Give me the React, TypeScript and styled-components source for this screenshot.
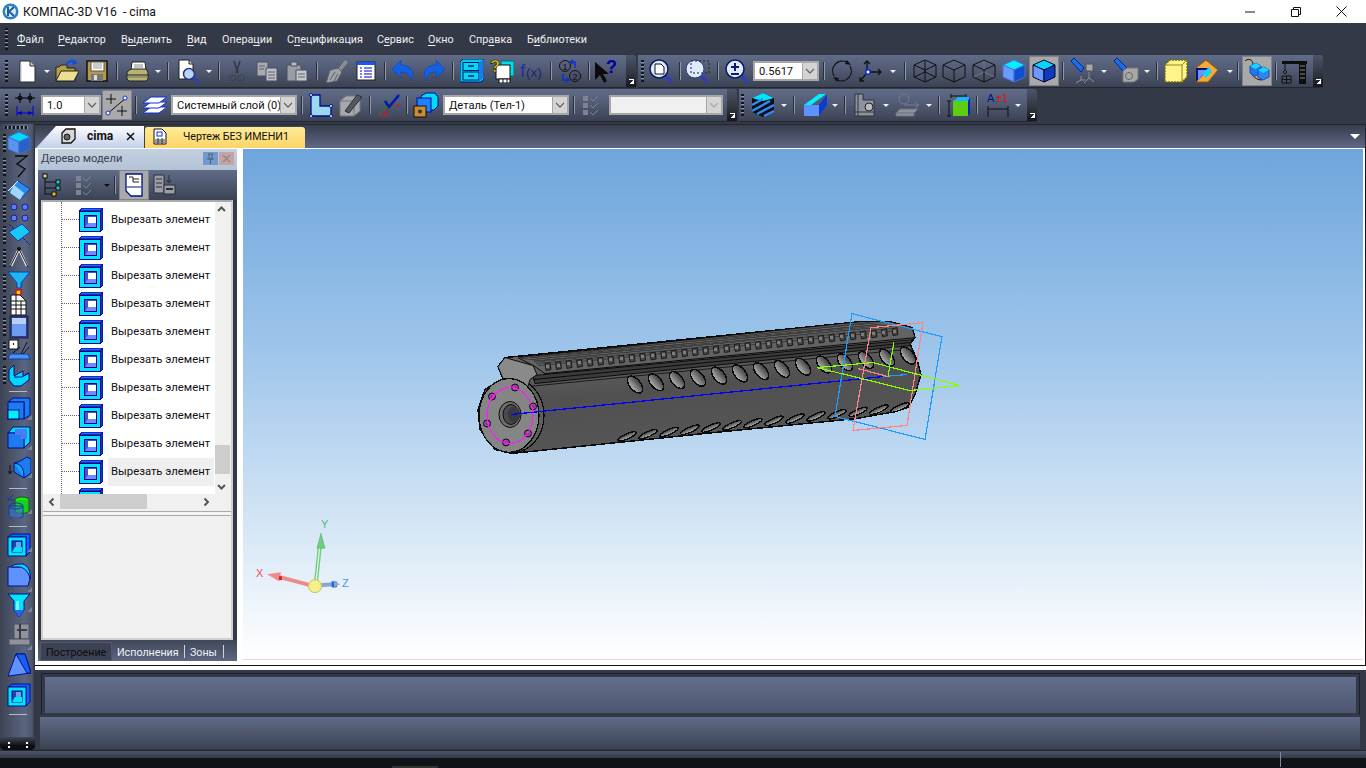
import React from "react";
import styled, { createGlobalStyle } from "styled-components";

const Global = createGlobalStyle`
  html, body { margin: 0; padding: 0; width: 1366px; height: 768px; overflow: hidden; background: #333947; }
  * { box-sizing: border-box; }
`;
const FONT = `Roboto, "Noto Sans", "Liberation Sans", sans-serif`;

const Page = styled.div`
  width: 1366px; height: 768px; display: flex; flex-direction: column; background: #333947;
  font-family: ${FONT}; font-size: 11px; overflow: hidden;
`;
const TitleBar = styled.header`
  height: 23px; background: #fff; display: flex; align-items: center; padding-left: 2px; color: #111; flex: none;
`;
const TitleText = styled.span` margin-left: 4px; font-size: 12.2px; white-space: pre; flex: 1; `;
const WinBtn = styled.div` width: 45.5px; height: 23px; display: flex; align-items: center; justify-content: center; `;
const MenuBar = styled.nav`
  height: 32px; flex: none; display: flex; align-items: center; padding: 0 0 0 5px; background: #333947; color: #eef0f4;
`;
const Grip = styled.div<{ $w: number; $pad?: number }>`
  width: ${p => p.$w}px; height: 22px; flex: none; padding-left: ${p => p.$pad ?? 0}px;
  &::before { content: ""; display: block; width: 3px; height: 22px;
    background: repeating-linear-gradient(to bottom, #11151d 0 2px, #8c94a8 2px 3px, transparent 3px 4px); }
`;
const MenuItem = styled.span<{ $w: number }>`
  width: ${p => p.$w}px; font-size: 10.8px; white-space: nowrap; flex: none;
  u { text-underline-offset: 2px; text-decoration-thickness: 1px; }
`;
const ToolRow = styled.div` display: flex; gap: 2px; height: 33px; margin-bottom: 1px; flex: none; `;
const ToolBand = styled.div`
  display: flex; align-items: center; height: 33px; flex: none; border-radius: 0 4px 4px 0;
  background: linear-gradient(to bottom, #606c88 0%, #525b74 45%, #3b4253 100%);
  border-bottom: 1px solid #23272f;
`;
const Slot = styled.div<{ $w: number; $on?: boolean }>`
  width: ${p => p.$w}px; height: 30px; flex: none; display: flex; align-items: center; justify-content: center;
  ${p => p.$on ? "background:#a9a9a9; border:1px solid #7e828c;" : ""}
`;
const Arrow = styled.div<{ $w: number; $dark?: boolean }>`
  width: ${p => p.$w}px; flex: none; display: flex; justify-content: center;
  &::before { content: ""; border: 3px solid transparent; border-top: 3px solid ${p => p.$dark ? "#101010" : "#f2f2f2"}; border-bottom: 0; width: 0; height: 0; }
`;
const Sep = styled.div<{ $w: number }>`
  width: ${p => p.$w}px; flex: none; display: flex; justify-content: center;
  &::before { content: ""; width: 2px; height: 18px; background: linear-gradient(to right, #2a2e38 50%, #8f97aa 50%); }
`;
const Gap = styled.div<{ $w: number }>` width: ${p => p.$w}px; flex: none; `;
const Cap = styled.div`
  width: 10px; height: 32px; flex: none; position: relative; border-radius: 0 4px 0 0;
  background: linear-gradient(to bottom, #4c5569 0%, #30343e 60%, #15171c 100%);
  &::after { content: ""; position: absolute; right: 2px; bottom: 3px; width: 5px; height: 4px;
    border-top: 1px solid #fff; background: linear-gradient(135deg, transparent 50%, #fff 50%); }
`;
const Combo = styled.div<{ $w: number; $off?: boolean }>`
  width: ${p => p.$w}px; height: 20px; flex: none; display: flex; border: 2px solid #a7a7a7;
  background: ${p => p.$off ? "#f0f0f0" : "#fff"}; color: #111; font-size: 11.1px;
`;
const ComboText = styled.div` flex: 1; padding: 1px 0 0 4px; line-height: 15px; white-space: nowrap; overflow: hidden; `;
const ComboBtn = styled.div`
  width: 15px; flex: none; background: #d4d4d4; display: flex; align-items: center; justify-content: center; border-left: 1px solid #a7a7a7;
`;
const Workspace = styled.div` display: flex; height: 626px; flex: none; margin-top: 1px; `;
const LeftBar = styled.aside`
  width: 35px; flex: none; display: flex; flex-direction: column; border-radius: 3px 0 0 0;
  background: linear-gradient(to right, #3d4454 0%, #5a6580 70%, #4d566c 92%, #2a2e38 100%);
`;
const LeftGrip = styled.div`
  height: 7px; flex: none; margin: 0 0 0 5px; width: 24px;
  background: repeating-linear-gradient(to right, #11151d 0 2px, #8c94a8 2px 3px, transparent 3px 4px);
  background-size: 100% 3px; background-repeat: no-repeat; background-position: 0 2px;
`;
const LeftRow = styled.div<{ $h: number }>`
  height: ${p => p.$h}px; flex: none; display: flex; align-items: center; justify-content: center; position: relative; padding-left: 3px;
`;
const LeftDots = styled.div`
  position: absolute; left: 3px; top: 50%; margin-top: -9px; width: 3px; height: 18px;
  background: repeating-linear-gradient(to bottom, #11151d 0 2px, #8c94a8 2px 3px, transparent 3px 4px);
`;
const LeftCorner = styled.div`
  position: absolute; right: 3px; bottom: 3px; width: 0; height: 0;
  border-left: 5px solid transparent; border-bottom: 5px solid #7a8296;
`;
const LeftRule = styled.div<{ $h: number }>`
  height: ${p => p.$h}px; flex: none; display: flex; align-items: center; justify-content: center;
  &::before { content: ""; width: 18px; height: 1px; background: #b3b9c7; }
`;
const LeftFoot = styled.div`
  margin-top: auto; height: 13px; flex: none; background: linear-gradient(to bottom, #3f4657, #0c0d10 70%);
  display: flex; align-items: center; justify-content: space-between; padding: 2px 3px 0 8px; border-radius: 0 0 4px 4px;
`;
const FootMark = styled.div<{ $w: number }>` width: ${p => p.$w}px; height: 6px; border-left: 2px dotted #fff; `;
const Main = styled.main` flex: 1; display: flex; flex-direction: column; min-width: 0; `;
const TabBand = styled.div`
  height: 24px; flex: none; display: flex; align-items: flex-end; padding-left: 1px; position: relative;
  background: linear-gradient(to bottom, #373d4c, #5e6984); border-top: 1px solid #23272f; border-right: 1px solid #23272f;
`;
const ActiveTab = styled.div`
  width: 108px; height: 22px; flex: none; display: flex; align-items: center; padding: 0 0 2px 25px; color: #111; font-weight: 700; font-size: 12px;
  background: linear-gradient(to bottom, #fbfcff, #c4d1ea); clip-path: polygon(20px 0, 100% 0, 100% 100%, 0 100%);
`;
const TabName = styled.span` margin-left: 11px; width: 39px; `;
const DocTab = styled.div`
  width: 161px; height: 21px; flex: none; display: flex; align-items: center; padding: 0 0 2px 8px; color: #111; font-size: 10.7px;
  background: linear-gradient(to bottom, #ffeb99, #fdd566); border-radius: 3px 3px 0 0; border-left: 1px solid #44413a;
`;
const DocName = styled.span` margin-left: 16px; white-space: nowrap; `;
const TabMenu = styled.div`
  position: absolute; right: 5px; top: 9px; width: 0; height: 0; border: 5px solid transparent; border-top: 5px solid #fff; border-bottom: 0;
`;
const Content = styled.div`
  flex: none; height: 518px; display: flex; background: #fff; padding: 1px 2px 4px 3px; border-right: 1px solid #111; border-bottom: 1px solid #111;
`;
const Panel = styled.section`
  width: 199px; flex: none; display: flex; flex-direction: column; background: #333947;
`;
const PanelHead = styled.div`
  height: 21px; flex: none; display: flex; align-items: center; padding: 0 3px 3px 3px; color: #3a4250; font-size: 11.1px;
  background: linear-gradient(to bottom, #c3d0df, #b3c3d6);
`;
const PanelTitle = styled.span` flex: 1; `;
const PanelBtn = styled.div<{ $c: string }>`
  width: 15px; height: 13px; margin-left: 1px; background: ${p => p.$c}; display: flex; align-items: center; justify-content: center;
`;
const PanelBar = styled.div`
  height: 30px; flex: none; display: flex; align-items: center; padding-left: 1px; background: linear-gradient(to bottom, #606c88, #3b4253);
`;
const PanelWell = styled.div`
  height: 440px; flex: none; margin: 0 4px 0 3px; border: 2px solid #cfcfcf; border-top-color: #aaa; display: flex; flex-direction: column; background: #f0f0f0;
`;
const TreeView = styled.div` height: 292px; flex: none; display: flex; background: #f0f0f0; `;
const TreeList = styled.div`
  width: 172px; flex: none; overflow: hidden; background: #fff; padding: 4px 0 0 0; position: relative;
`;
const TreeRow = styled.div`
  height: 28px; display: flex; align-items: center; padding-left: 18px; flex: none; white-space: nowrap; font-size: 11.3px; color: #111;
  &::before { content: ""; width: 18px; height: 1px; flex: none; border-top: 1px dotted #666; }
`;
const TreeLabel = styled.span<{ $hi?: boolean }>`
  margin-left: 5px; height: 28px; line-height: 28px; width: 106px; padding-left: 3px; overflow: hidden; flex: none;
  ${p => p.$hi ? "background:#efefef;" : ""}
`;
const TreeLine = styled.div`
  position: absolute; left: 18px; top: 0; bottom: 0; border-left: 1px dotted #666;
`;
const VScroll = styled.div`
  flex: 1; display: flex; flex-direction: column; align-items: center; justify-content: space-between; padding: 4px 3px 4px 0; position: relative;
`;
const VThumb = styled.div` position: absolute; left: 0; right: 1px; top: 243px; height: 29px; background: #cdcdcd; `;
const HScroll = styled.div` height: 16px; flex: none; display: flex; align-items: center; background: #f0f0f0; position: relative; padding: 0 20px 0 4px; justify-content: space-between; `;
const HThumb = styled.div` position: absolute; left: 17px; width: 87px; top: 0; bottom: 1px; background: #cdcdcd; `;
const Splitter = styled.div` height: 5px; flex: none; border-top: 1px solid #aaa; border-bottom: 1px solid #aaa; margin-top: 1px; background: #f4f4f4; `;
const PanelTabs = styled.div`
  flex: 1; display: flex; align-items: stretch; background: linear-gradient(to bottom, #3f4658, #5c6781); color: #f1f3f7; font-size: 10.7px; padding: 2px 0 0 2px;
`;
const PanelTab = styled.div<{ $on?: boolean; $w: number }>`
  width: ${p => p.$w}px; flex: none; display: flex; align-items: center; padding: 2px 0 0 5px; position: relative;
  ${p => p.$on ? "background:#3b4254; color:#0d0d0d; border:1px solid #4f586e;" : ""}
  ${p => p.$on ? "" : `&::after { content:""; position:absolute; right:0; top:3px; bottom:3px; width:1px; background:#cfd3dc; }`}
`;
const Viewport = styled.div`
  flex: 1; margin-left: 6px; height: 511px; background: linear-gradient(to bottom, #6ea5dc 0%, #9cc4ea 38%, #d2e4f5 72%, #ffffff 100%);
  border-bottom: 1px solid #dcdcdc;
`;
const Scene = styled.svg` display: block; width: 100%; height: 100%; `;
const WhiteGap = styled.div` height: 4px; flex: none; background: #fff; `;
const BottomDock = styled.div` flex: 1; background: #333947; padding: 3px 6px 0 5px; display: flex; flex-direction: column; `;
const CommandPanel = styled.div`
  height: 42px; flex: none; margin: 0 0 2px 1px; width: 1319px; border: 1px solid #1e2129; border-width: 1px 1px 0 1px;
  padding: 3px 3px 0 3px; background: #333947;
`;
const CommandFill = styled.div` height: 36px; background: linear-gradient(to bottom, #626e8b, #4d5670); `;
const PropertyPanel = styled.div` height: 32px; flex: none; width: 1320px; background: linear-gradient(to bottom, #5f6b87, #3c4354); `;
const StatusBar = styled.footer`
  height: 18px; flex: none; border-top: 1px solid #22252c; display: flex; flex-direction: column; position: relative; background: #111318;
`;
const StatusTop = styled.div` height: 7px; flex: none; background: linear-gradient(to bottom, #4e566b, #333947); `;
const StatusDivider = styled.div` position: absolute; left: 1280px; top: 1px; height: 15px; width: 1px; background: #7d88a4; `;
const StatusPatch = styled.div` position: absolute; left: 392px; bottom: 0; width: 46px; height: 2px; background: #333; `;

/* ---------- icons ---------- */
const Svg: React.FC<{ s?: number; w?: number; h?: number; children: React.ReactNode; vb?: string }> = ({ s = 24, w, h, children, vb = "0 0 24 24" }) => (
  <svg width={w ?? s} height={h ?? s} viewBox={vb} style={{ display: "block", flex: "none" }}>{children}</svg>
);
const Cube = ({ t, l, r, st = "#00008b" }: { t: string; l: string; r: string; st?: string }) => (
  <Svg>
    <polygon points="12,1 23,6 12,11 1,6" fill={t} stroke={st} />
    <polygon points="1,6 12,11 12,23 1,18" fill={l} stroke={st} />
    <polygon points="23,6 12,11 12,23 23,18" fill={r} stroke={st} />
  </Svg>
);
const Wire = ({ hidden, c = "#101010" }: { hidden?: string; c?: string }) => (
  <Svg>
    {hidden && <path d="M12 13L12 2M12 13L1.500 18M12 13L22.500 18" stroke={hidden} fill="none" />}
    <path d="M12 1L23 6V18L12 23L1 18V6ZM1 6L12 11L23 6M12 11V23" stroke={c} fill="none" />
  </Svg>
);
const CutEl = () => (
  <Svg>
    <polygon points="0,3 3,0 24,0 21,3" fill="#1e64ff" stroke="#00008b" />
    <polygon points="21,3 24,0 24,21 21,24" fill="#0040c8" stroke="#00008b" />
    <rect x="0.500" y="3.500" width="21" height="20" fill="#00e5ff" stroke="#00008b" />
    <rect x="5.500" y="7.500" width="12" height="12" fill="#3a55d8" stroke="#00008b" />
    <rect x="9" y="9" width="8" height="6" fill="#fff" />
    <polygon points="6,19 9,15 17,15 17,19" fill="#6e8cff" />
  </Svg>
);
const Lens = ({ children }: { children?: React.ReactNode }) => (
  <Svg>
    <line x1="15" y1="15" x2="23" y2="23" stroke="#2a3cc8" strokeWidth="3" />
    <circle cx="10" cy="10" r="9" fill="#dfeaff" stroke="#0a1a60" strokeWidth="1.500" />
    {children}
  </Svg>
);
const I: Record<string, React.ReactNode> = {
  newDoc: <Svg><path d="M5 2H15L20 7V23H5Z" fill="#fff" stroke="#2a2a2a" /><path d="M15 2V7H20" fill="#ccc" stroke="#2a2a2a" /><path d="M6 22V4" stroke="#b9c2d6" /></Svg>,
  open: <Svg><path d="M1 22V8H4L6 6H12V9H20V22Z" fill="#b7a24a" stroke="#222" /><path d="M1 22L6 12H24L19 22Z" fill="#ecdf8f" stroke="#222" /><path d="M11 6C13 2 17 1 20 3" stroke="#0a50e0" strokeWidth="2" fill="none" /><path d="M18 0L23 4L17 6Z" fill="#0a50e0" /></Svg>,
  save: <Svg><rect x="2" y="2" width="20" height="20" fill="#b59a45" stroke="#111" strokeWidth="1.500" /><rect x="6" y="3" width="13" height="9" fill="#fff" stroke="#555" /><path d="M8 5H17M8 7H17M8 9H17" stroke="#999" /><rect x="6" y="15" width="12" height="7" fill="#777" /><rect x="9" y="16" width="3" height="5" fill="#ddd" /></Svg>,
  print: <Svg><path d="M7 3H20L21 11H6Z" fill="#fff" stroke="#222" /><path d="M9 6H18M9 8H18" stroke="#888" /><path d="M2 13L6 10H21L23 13V20L21 22H4L2 20Z" fill="#b7b276" stroke="#222" /><path d="M2 16H23" stroke="#222" /><path d="M2 18H23" stroke="#7b7a4e" /></Svg>,
  preview: <Svg><path d="M3 1H13L17 5V20H3Z" fill="#fff" stroke="#222" /><path d="M13 1V5H17" fill="#ccc" stroke="#222" /><circle cx="13" cy="15" r="5.500" fill="#bcd2f5" stroke="#26357f" strokeWidth="1.500" /><line x1="17" y1="19" x2="23" y2="23" stroke="#2a3cc8" strokeWidth="2.500" /></Svg>,
  cut: <Svg><path d="M9 2L13 14M15 2L11 14" stroke="#343844" strokeWidth="1.500" /><circle cx="8" cy="19" r="3" fill="none" stroke="#343844" strokeDasharray="2 1" /><circle cx="16" cy="19" r="3" fill="none" stroke="#343844" strokeDasharray="2 1" /></Svg>,
  copy: <Svg><path d="M2 3H13V17H2Z" fill="#a8abb2" stroke="#4c5060" /><path d="M11 9H22V22H11Z" fill="#bdbfc5" stroke="#4c5060" /><path d="M13 13H20M13 16H20M13 19H20" stroke="#5e626e" /><path d="M4 7H10M4 10H9" stroke="#5e626e" /></Svg>,
  paste: <Svg><path d="M2 6H16V22H2Z" fill="#9a9da6" stroke="#4c5060" /><path d="M6 3H12V7H6Z" fill="#b7b9bf" stroke="#4c5060" /><path d="M11 11H22V22H11Z" fill="#c5c7cc" stroke="#4c5060" /><path d="M13 15H20M13 18H20" stroke="#5e626e" /></Svg>,
  brush: <Svg><path d="M14 10L21 1L24 3L17 12Z" fill="#8d8d90" /><path d="M6 11L14 9L18 13L13 22L2 24Z" fill="#a0a2a8" stroke="#5a5d68" /><path d="M6 21L11 13M10 22L14 15" stroke="#5a5d68" /></Svg>,
  table: <Svg w={20} h={20} vb="0 0 20 20"><rect x="1" y="1" width="18" height="18" fill="#fff" stroke="#222" /><rect x="1" y="1" width="18" height="3" fill="#2255ee" /><path d="M4 7H6M8 7H16M4 10H6M8 10H16M4 13H6M8 13H16M4 16H6M8 16H16" stroke="#0000c8" /></Svg>,
  undo: <Svg><path d="M0 10L9 1V6C18 6 23 11 20 22C18 15 14 13 9 13V19Z" fill="#1560e0" stroke="#0a3cb0" strokeWidth=".5" /></Svg>,
  redo: <Svg><path d="M24 10L15 1V6C6 6 1 11 4 22C6 15 10 13 15 13V19Z" fill="#1560e0" stroke="#0a3cb0" strokeWidth=".5" /></Svg>,
  db: <Svg><path d="M0 3L3 0H24V20L21 23H0Z" fill="#00cfe8" stroke="#00147a" /><rect x="3" y="3.500" width="16" height="8" fill="#00d9ee" stroke="#00147a" /><rect x="3" y="13" width="16" height="8" fill="#00d9ee" stroke="#00147a" /><path d="M8 7H14M8 17H14" stroke="#00147a" strokeWidth="1.500" /><path d="M19 3L23 1V19L19 23Z" fill="#1d7ae8" /></Svg>,
  help: <Svg><rect x="11" y="2" width="13" height="15" fill="#00dce8" stroke="#006c80" /><rect x="6" y="6" width="14" height="14" fill="#fff" stroke="#111" /><path d="M9 20H20V24H9ZM13 20V24M17 20V24" fill="#fff" stroke="#111" /><text x="0" y="13" fontFamily="Liberation Sans" fontWeight="700" fontSize="16" fill="#f5e400" stroke="#111" strokeWidth=".6">?</text></Svg>,
  fx: <Svg w={24} h={24} vb="0 0 24 24"><text x="0" y="18" fontFamily="Liberation Sans" fontSize="19" fill="#1a2fb0">f</text><text x="6" y="18" fontFamily="Liberation Sans" fontSize="13.500" fill="#1a2570">(x)</text></Svg>,
  num: <Svg><circle cx="7" cy="7" r="5.500" fill="none" stroke="#111" /><text x="4.500" y="10.500" fontFamily="Liberation Sans" fontSize="9" fill="#111">1</text><circle cx="17" cy="17" r="5.500" fill="none" stroke="#111" /><text x="14.500" y="20.500" fontFamily="Liberation Sans" fontSize="9" fill="#111">2</text><path d="M17 9V3H14M15 1L12 3L15 5" stroke="#0a30d0" strokeWidth="1.500" fill="none" /><path d="M5 15V21H9M8 19L11 21L8 23" stroke="#0a30d0" strokeWidth="1.500" fill="none" /></Svg>,
  cursor: <Svg w={26} h={26} vb="0 0 26 26"><path d="M1 4V22L6 17L10 25L13 23L9 16H15Z" fill="#0b0b0b" /><text x="12" y="15" fontFamily="Liberation Sans" fontWeight="700" fontSize="18" fill="#0000a0">?</text></Svg>,
  zoomPage: <Lens><path d="M6 5H12L15 8V15H6Z" fill="#fff" stroke="#111" /></Lens>,
  zoomWin: <Svg w={26} h={24} vb="0 0 26 24"><line x1="14" y1="15" x2="23" y2="23" stroke="#2a3cc8" strokeWidth="3" /><circle cx="10" cy="10" r="9" fill="#dfeaff" stroke="#2a3c80" strokeWidth="1" /><rect x="6" y="2" width="18" height="12" fill="none" stroke="#222" strokeDasharray="2 2" /></Svg>,
  zoomPM: <Lens><path d="M6 8H14M10 4V12M6 15H14" stroke="#0b1a70" strokeWidth="2" /></Lens>,
  rotate: <Svg><path d="M4 17A10 10 0 0 1 17 3" fill="none" stroke="#111" strokeWidth="1.200" /><path d="M20 7A10 10 0 0 1 7 21" fill="none" stroke="#111" strokeWidth="1.200" /><path d="M17 1L21 6L15 5Z" fill="#111" /><path d="M7 23L3 18L9 19Z" fill="#111" /></Svg>,
  axis: <Svg><path d="M9 12V2M6 5L9 2L12 5M12 13H23M20 10L23 13L20 16M8 15L2 22M2 18V22H6" stroke="#111" fill="none" strokeWidth="1.300" /><rect x="8" y="11" width="4" height="4" fill="#fff" stroke="#1030e0" strokeWidth="1.500" /></Svg>,
  wire1: <Wire hidden="#101010" />,
  wire2: <Wire />,
  wire3: <Wire hidden="#777" />,
  shade: <Cube t="#00f0ff" l="#6b9bff" r="#1050d0" st="#4a6fd0" />,
  shadeEdge: <Cube t="#00d8ff" l="#6b9bff" r="#0a3cc0" st="#020230" />,
  lampY: <Svg w={26} h={26} vb="0 0 26 26"><path d="M1 3L4 0L14 10L11 14Z" fill="#1670e8" stroke="#05209a" /><rect x="16" y="6" width="7" height="7" fill="#a8a8a8" stroke="#555" /><path d="M19 14V20L14 25M19 20L24 24M11 18V22L6 25M11 22H15" stroke="#8e929c" fill="none" /></Svg>,
  lampC: <Svg w={26} h={26} vb="0 0 26 26"><path d="M1 3L4 0L14 10L11 14Z" fill="#1670e8" stroke="#05209a" /><path d="M10 13L14 10H25V21L21 24H10Z" fill="#a8a8a8" stroke="#777" /><circle cx="16" cy="18" r="3.500" fill="none" stroke="#666" /></Svg>,
  yellow: <Svg><path d="M1 6L6 1H23V18L18 23H1Z" fill="#fff38a" stroke="#6f6a00" strokeDasharray="2 1" strokeWidth="1.300" /><path d="M1 6H18V23M18 6L23 1" stroke="#8b8a1b" fill="none" /></Svg>,
  diag: <Svg w={26} h={26} vb="0 0 26 26"><polygon points="2,10 12,2 24,12 14,24 2,24" fill="#f6a83a" stroke="#8a5a00" /><polygon points="2,10 16,10 2,24" fill="#00108a" /><polygon points="4,12 13,12 4,22" fill="#6e92ff" /><polygon points="8,16 15,9 18,14 12,20" fill="#18d0f8" /></Svg>,
  multi: <Svg w={26} h={26} vb="0 0 26 26"><path d="M1 3C5 -1 12 3 7 10C5 14 10 22 18 22" stroke="#111" fill="none" /><polygon points="6,8 12,5 17,8 17,15 11,18 6,15" fill="#1e7af0" stroke="#1e4cb8" /><polygon points="14,12 20,9 25,12 25,19 19,22 14,19" fill="#2a86f4" stroke="#1e4cb8" /><polygon points="6,8 12,5 17,8 11,11" fill="#16d8ff" /><polygon points="14,12 20,9 25,12 19,15" fill="#16d8ff" /></Svg>,
  crane: <Svg w={28} h={26} vb="0 0 28 26"><path d="M1 3H26V6H1ZM18 6H25V26H18Z" fill="#0e0e0e" /><path d="M19 8H24M19 12H24M19 16H24M19 20H24" stroke="#888" /><path d="M4 6L12 3M4 6V12" stroke="#111" /><path d="M4 12L6 14L4 16L2 14Z" fill="none" stroke="#111" /><path d="M1 18H10V25H1ZM1 21.500H10M5.500 18V25" fill="none" stroke="#111" /></Svg>,
  dimCoord: <Svg w={20} h={24} vb="0 0 20 24"><circle cx="5" cy="5" r="2" stroke="#000" fill="none" /><circle cx="15" cy="5" r="2" stroke="#000" fill="none" /><path d="M5 0V10M0 5H10M15 0V10M10 5H20" stroke="#000" /><path d="M2 13V23M18 13V23M2 20H18" stroke="#0000d8" /><path d="M2 20L7 18V22ZM18 20L13 18V22Z" fill="#0000d8" /></Svg>,
  points: <Svg w={26} h={26} vb="0 0 26 26"><path d="M3 22L22 6" stroke="#111" /><circle cx="21" cy="6" r="2" fill="#fff" stroke="#1030d8" /><circle cx="4" cy="21" r="2" fill="#fff" stroke="#1030d8" /><path d="M7 2V12M2 7H12M18 14V24M13 19H23" stroke="#111" /></Svg>,
  layers: <Svg w={26} h={24} vb="0 0 26 24"><path d="M1 20L9 14H25L17 20Z" fill="#fff" stroke="#1030e0" /><path d="M1 15L9 9H25L17 15Z" fill="#fff" stroke="#1030e0" /><path d="M1 10L9 4H25L17 10Z" fill="#fff" stroke="#1030e0" /></Svg>,
  poly: <Svg><path d="M2 2H11V13H22V23H2Z" fill="#9bd7ee" stroke="#00108a" strokeWidth="1.300" /><circle cx="2" cy="2" r="1.500" fill="#fff" stroke="#00108a" /><circle cx="22" cy="23" r="1.500" fill="#fff" stroke="#00108a" /><circle cx="2" cy="23" r="1.500" fill="#fff" stroke="#00108a" /><circle cx="22" cy="13" r="1.500" fill="#fff" stroke="#00108a" /></Svg>,
  pencil: <Svg><path d="M1 8L7 3H21V18L15 23H1Z" fill="#a6a8ae" stroke="#777" /><path d="M1 8H15V23M15 8L21 3" stroke="#777" fill="none" /><path d="M6 18L18 2L23 4L10 20Z" fill="#55585f" stroke="#2c2e34" /></Svg>,
  csys: <Svg><path d="M8 22L10 14L22 12" stroke="#d11" fill="none" /><path d="M2 22L10 14V6" stroke="#0b8f1a" fill="none" /><path d="M1 23L12 22" stroke="#e11" /><path d="M10 14H18" stroke="#0b8f1a" /><path d="M8 8L12 14L22 2" stroke="#0018b0" strokeWidth="2.500" fill="none" /></Svg>,
  parts: <Svg w={26} h={26} vb="0 0 26 26"><path d="M8 4L13 1H22L25 5V14L21 18H17V9H8Z" fill="#00d8ff" stroke="#00108a" /><rect x="4" y="6" width="14" height="14" fill="#1e80ff" stroke="#00108a" /><rect x="1" y="14" width="12" height="11" fill="#c98d2e" stroke="#111" /><circle cx="7" cy="19.500" r="2" fill="#333" /></Svg>,
  treeCheck: <Svg><path d="M3 3H8V8H3ZM3 10H8V15H3ZM3 17H8V22H3Z" fill="#7d8394" /><path d="M10 5L13 8L18 3M10 12L13 15L18 10M10 19L13 22L18 17" stroke="#7d8394" fill="none" /></Svg>,
  hatch: <Svg w={24} h={26} vb="0 0 24 26"><polygon points="12,1 23,6 23,20 12,25 1,20 1,6" fill="#101010" /><polygon points="12,1 23,6 12,9 1,6" fill="#00e5ff" /><path d="M1 13L12 7M1 19L19 9M6 22L23 13M13 24L23 19" stroke="#2c8cff" strokeWidth="2.500" /></Svg>,
  prism: <Svg><polygon points="1,12 16,1 23,1 8,12" fill="#00f0ff" /><polygon points="1,12 16,12 16,23 1,23" fill="#5e92ff" /><polygon points="16,12 24,1 24,12 16,23" fill="#0a3cd0" /></Svg>,
  partGray: <Svg w={26} h={26} vb="0 0 26 26"><path d="M3 2H11V8H22V24H3Z" fill="#8e929c" stroke="#2f323a" /><circle cx="17" cy="15" r="4" fill="#b7bac2" stroke="#222" /><path d="M6 2V24M3 20H22" stroke="#2f323a" /></Svg>,
  sketchMove: <Svg w={26} h={24} vb="0 0 26 24"><circle cx="9" cy="6" r="5" fill="none" stroke="#767c8c" /><path d="M9 12H23M20 9L24 12L20 15" fill="none" stroke="#767c8c" /><path d="M1 20L5 16H23L19 20ZM1 20V23H19V20" fill="#8e929c" stroke="#6a6e7a" /></Svg>,
  gabarit: <Svg><path d="M5 1V5M20 1V5M5 3H20" stroke="#111" /><path d="M1 8H5M1 23H5M3 8V23" stroke="#111" /><rect x="7" y="8" width="15" height="15" fill="#5ecf10" /><polygon points="7,8 12,4 24,4 22,8" fill="#18b6f8" /><polygon points="22,8 24,4 24,20 22,23" fill="#0024c8" /></Svg>,
  tolerance: <Svg w={24} h={26} vb="0 0 24 26"><text x="1" y="10" fontFamily="Liberation Sans" fontSize="11" fill="#00108a">A</text><text x="10" y="10" fontFamily="Liberation Sans" fontSize="11" fill="#e01010">±1</text><path d="M2 14V25M22 14V25M2 17H22" stroke="#111" /></Svg>,
  modelCube: <Cube t="#00d8ff" l="#5c92f0" r="#2b60c8" st="#3a70c8" />,
  scribble: <Svg><path d="M8 1H20L10 9L18 14L11 22" stroke="#0a0a0a" fill="none" strokeWidth="1.300" /></Svg>,
  roller: <Svg><polygon points="1,13 11,3 23,11 13,22" fill="#2b8cf0" stroke="#0c3cb0" /><polygon points="7,7 17,15 13,22 3,15" fill="#9fd7ff" /><path d="M1 13L11 3" stroke="#f4f4f4" /></Svg>,
  dots: <Svg><circle cx="7" cy="6" r="3" fill="#5f7cf0" stroke="#1020a0" /><circle cx="18" cy="6" r="3" fill="#5f7cf0" stroke="#1020a0" /><circle cx="7" cy="17" r="3" fill="#5f7cf0" stroke="#1020a0" /><circle cx="18" cy="17" r="3" fill="#5f7cf0" stroke="#1020a0" /></Svg>,
  plane: <Svg><path d="M2 1L23 22" stroke="#0018b0" strokeDasharray="3 1" /><polygon points="2,9 15,1 23,9 11,18" fill="#18c8f8" stroke="#0c3cb0" /></Svg>,
  compass: <Svg><path d="M12 3L20 20M12 3L4 20" stroke="#f5f5f5" fill="none" strokeWidth="2.500" /><path d="M12 3L21 21M12 3L3 21" stroke="#111" fill="none" /><circle cx="12" cy="3" r="2" fill="#111" /></Svg>,
  funnel: <Svg><polygon points="1,1 23,1 14,12 14,17 10,17 10,12" fill="#1eb8f0" stroke="#0c3cb0" /><rect x="9" y="19" width="5" height="5" fill="#f4d800" stroke="#e01010" strokeWidth="1.500" /></Svg>,
  sheet: <Svg><path d="M4 2H13L19 8V22H4Z" fill="#fff" stroke="#111" /><path d="M4 8H19M4 12H19M4 16H19M9 2V22M14 8V22" stroke="#111" /></Svg>,
  panelBlue: <Svg><rect x="3" y="1" width="18" height="22" fill="#2c3a9a" stroke="#222" /><rect x="5" y="3" width="14" height="18" fill="#6e9cf0" /><rect x="5" y="3" width="14" height="6" fill="#b7d2f0" /></Svg>,
  mate: <Svg><rect x="2" y="1" width="9" height="9" fill="#fff" stroke="#111" /><path d="M6 5H7" stroke="#111" strokeWidth="2" /><path d="M3 15H21L23 20H1Z" fill="#4a92f0" stroke="#0c3cb0" /><path d="M6 14L13 8M14 15L20 3M16 15L22 8" stroke="#111" fill="none" /></Svg>,
  corner: <Svg><path d="M2 7L7 2V13L16 8V13L22 10V17L14 23H7L2 17Z" fill="#00d8ff" stroke="#00108a" /><path d="M7 14L15 14L22 10" stroke="#00108a" fill="none" /></Svg>,
  ext1: <Svg><polygon points="1,5 6,1 23,1 23,18 17,22 17,5" fill="#1e7af0" stroke="#00108a" /><rect x="1" y="5" width="16" height="17" fill="#1e7af0" stroke="#00108a" /><rect x="1" y="13" width="11" height="9" fill="#00f0ff" stroke="#00108a" /></Svg>,
  ext2: <Svg><polygon points="1,7 6,1 23,1 23,16 17,22 17,7" fill="#00d8ff" stroke="#00108a" /><rect x="1" y="7" width="16" height="15" fill="#1e7af0" stroke="#00108a" /><polygon points="8,3 20,3 20,13 14,13 14,9 8,9" fill="#4a7cf0" /></Svg>,
  bend: <Svg><path d="M3 10V18M1 16L3 19L5 16" stroke="#111" fill="none" /><path d="M7 8C13 7 16 4 20 2L24 4V18L17 23L7 17Z" fill="#1e7af0" stroke="#00108a" /><path d="M7 8C13 9 17 11 17 23" stroke="#00108a" fill="#00d8ff" fillOpacity=".5" /></Svg>,
  cyl: <Svg><path d="M1 6L6 1M1 6H8M1 6V3" stroke="#0c3cb0" /><ellipse cx="15" cy="6" rx="7" ry="3" fill="#20e820" stroke="#106010" /><path d="M8 6V17C8 20 22 20 22 17V6" fill="#18d018" stroke="#106010" /><path d="M2 12V22C2 25 16 25 16 22V12Z" fill="#3a78d0" fillOpacity=".55" stroke="#0c3cb0" /><ellipse cx="9" cy="12" rx="7" ry="3" fill="none" stroke="#0c3cb0" /></Svg>,
  cutBig: <Svg><polygon points="1,4 5,1 23,1 23,19 19,23 19,4" fill="#1260ff" stroke="#00108a" /><rect x="1" y="4" width="18" height="19" fill="#00e5ff" stroke="#00108a" /><rect x="5" y="8" width="10" height="11" fill="#2c3fb0" stroke="#00108a" /><polygon points="5,19 8,14 15,14 15,19" fill="#00e5ff" /><rect x="9" y="9" width="5" height="5" fill="#6ea0f0" /></Svg>,
  roundQ: <Svg><path d="M1 4H13C19 4 23 10 23 16L21 23H1Z" fill="#5e92ff" stroke="#00108a" /><path d="M4 4C6 1 12 1 16 1C21 3 24 8 23 16C22 9 17 4 12 4Z" fill="#00d8ff" stroke="#00108a" /></Svg>,
  drill: <Svg><polygon points="1,1 23,1 17,8 17,17 12,24 7,17 7,8" fill="#00e5ff" stroke="#00108a" /><rect x="9" y="8" width="3" height="9" fill="#78f5ff" /><polygon points="7,17 17,17 12,24" fill="#2b60f0" /></Svg>,
  machine: <Svg><path d="M7 2H22V17H7Z" fill="#8f929a" stroke="#4e515a" /><path d="M2 17H23V23H2Z" fill="#8f929a" stroke="#4e515a" /><path d="M13 2V17M10 8H20" stroke="#3a3d45" strokeWidth="2" /></Svg>,
  trap: <Svg><polygon points="9,1 18,1 24,20 1,23" fill="#5e92ff" stroke="#00108a" /><polygon points="9,1 18,1 24,20 20,20" fill="#1e5cf0" stroke="#00108a" /></Svg>,
};

const Chevron = ({ c = "#666" }: { c?: string }) => (
  <svg width="10" height="6" viewBox="0 0 10 6" style={{ display: "block" }}><path d="M1 1L5 5L9 1" fill="none" stroke={c} strokeWidth="1.300" /></svg>
);
const Caret = ({ d, c = "#555" }: { d: "up" | "down" | "left" | "right"; c?: string }) => {
  const r = { up: 180, down: 0, left: 90, right: -90 }[d];
  return <svg width="9" height="6" viewBox="0 0 9 6" style={{ display: "block", transform: `rotate(${r}deg)` }}><path d="M1 1L4.500 4.500L8 1" fill="none" stroke={c} strokeWidth="2" /></svg>;
};

type Item =
  | ["t", number, string]
  | ["on", number, string]
  | ["a", number]
  | ["s", number]
  | ["g", number]
  | ["grip", number, number?]
  | ["cap"]
  | ["c", number, string, boolean?];

const renderItems = (items: Item[]) => items.map((it, i) => {
  switch (it[0]) {
    case "t": return <Slot key={i} $w={it[1]}>{I[it[2]]}</Slot>;
    case "on": return <Slot key={i} $w={it[1]} $on>{I[it[2]]}</Slot>;
    case "a": return <Arrow key={i} $w={it[1]} />;
    case "s": return <Sep key={i} $w={it[1]} />;
    case "g": return <Gap key={i} $w={it[1]} />;
    case "grip": return <Grip key={i} $w={it[1]} $pad={it[2]} />;
    case "cap": return <Cap key={i} />;
    case "c": return (
      <Combo key={i} $w={it[1]} $off={it[3]}>
        <ComboText>{it[2]}</ComboText>
        <ComboBtn><Chevron c={it[3] ? "#aaa" : "#666"} /></ComboBtn>
      </Combo>
    );
  }
});

const row1a: Item[] = [["grip",13,5],["t",28,"newDoc"],["a",12],["t",28,"open"],["t",32,"save"],["s",8],["t",32,"print"],["a",10],["s",10],["t",30,"preview"],["a",12],["s",8],["t",28,"cut"],["t",32,"copy"],["t",28,"paste"],["s",12],["t",26,"brush"],["t",34,"table"],["s",4],["t",34,"undo"],["t",24,"redo"],["s",16],["t",22,"db"],["t",38,"help"],["t",22,"fx"],["s",16],["t",22,"num"],["s",16],["t",20,"cursor"],["g",9],["cap"]];
const row1b: Item[] = [["grip",8,3],["t",30,"zoomPage"],["s",8],["t",28,"zoomWin"],["s",12],["t",26,"zoomPM"],["g",3],["c",66,"0.5617"],["s",10],["t",26,"rotate"],["t",30,"axis"],["a",16],["s",8],["t",32,"wire1"],["t",26,"wire2"],["t",34,"wire3"],["t",26,"shade"],["g",2],["on",30,"shadeEdge"],["s",8],["t",32,"lampY"],["a",10],["t",34,"lampC"],["a",8],["s",12],["t",26,"yellow"],["t",36,"diag"],["a",10],["s",6],["g",1],["on",30,"multi"],["s",8],["t",30,"crane"],["g",3],["cap"]];
const row2a: Item[] = [["grip",13,5],["t",24,"dimCoord"],["g",4],["c",60,"1.0"],["g",1],["on",30,"points"],["s",8],["t",30,"layers"],["g",1],["c",126,"Системный слой (0)"],["s",10],["t",28,"poly"],["t",32,"pencil"],["s",6],["t",32,"csys"],["s",4],["t",34,"parts"],["c",126,"Деталь (Тел-1)"],["s",10],["t",26,"treeCheck"],["g",4],["c",114,"",true],["g",4],["cap"]];
const row2b: Item[] = [["grip",6,2],["t",36,"hatch"],["a",6],["s",14],["t",28,"prism"],["a",12],["s",8],["t",32,"partGray"],["a",10],["t",34,"sketchMove"],["a",8],["s",12],["t",26,"gabarit"],["s",12],["t",30,"tolerance"],["a",10],["g",4],["cap"]];

type L = { k: "i"; h: number; n: string; dots?: boolean; mark?: boolean } | { k: "r"; h: number };
const left: L[] = [
  {k:"i",h:24,n:"modelCube",dots:true},{k:"i",h:24,n:"scribble",dots:true},{k:"i",h:22,n:"roller",dots:true},{k:"i",h:24,n:"dots",dots:true},
  {k:"i",h:20,n:"plane",dots:true},{k:"i",h:26,n:"compass",dots:true},{k:"i",h:24,n:"funnel",dots:true},{k:"i",h:20,n:"sheet",dots:true},
  {k:"i",h:24,n:"panelBlue",dots:true},{k:"i",h:24,n:"mate",dots:true},{k:"i",h:24,n:"corner",dots:true},{k:"r",h:8},
  {k:"i",h:28,n:"ext1",mark:true},{k:"i",h:30,n:"ext2",mark:true},{k:"i",h:28,n:"bend",mark:true},{k:"r",h:14},
  {k:"i",h:22,n:"cyl",mark:true},{k:"r",h:18},{k:"i",h:20,n:"cutBig",mark:true},{k:"i",h:40,n:"roundQ",mark:true},
  {k:"i",h:20,n:"drill",mark:true},{k:"i",h:38,n:"machine",mark:true},{k:"i",h:24,n:"trap"},{k:"i",h:36,n:"cutBig"},{k:"r",h:2},
];

const menu: [React.ReactNode, number][] = [
  [<><u>Ф</u>айл</>, 41],[<><u>Р</u>едактор</>, 63],[<>В<u>ы</u>делить</>, 66],[<><u>В</u>ид</>, 35],[<>Опера<u>ц</u>ии</>, 65],
  [<>С<u>п</u>ецификация</>, 90],[<>С<u>е</u>рвис</>, 51],[<><u>О</u>кно</>, 41],[<>Спр<u>а</u>вка</>, 58],[<>Б<u>и</u>блиотеки</>, 70],
];

/* ---------- 3D scene, drawn in screen coordinates ---------- */
const lerp = (a: number, b: number, t: number) => a + (b - a) * t;
const teeth = Array.from({ length: 34 }, (_, i) => { const t = i / 33; return [lerp(548, 895, t), lerp(367, 332, t)]; });
const upper = Array.from({ length: 14 }, (_, i) => { const t = i / 13; return [lerp(635, 908, t), lerp(385, 356, t)]; });
const lower = Array.from({ length: 14 }, (_, i) => { const t = i / 13; return [lerp(627, 900, t), lerp(437, 408, t)]; });
const bolts = [[515,388],[492,397],[533,407],[487,424],[528,434],[506,443]];
const hatchLines = Array.from({ length: 5 }, (_, i) => i);

const Model = () => (
  <Scene viewBox="243 149 1120 511" preserveAspectRatio="none">
    <defs>
      <linearGradient id="body" gradientUnits="userSpaceOnUse" x1="700" y1="345" x2="708" y2="435">
        <stop offset="0" stopColor="#666" /><stop offset=".45" stopColor="#505050" /><stop offset="1" stopColor="#555" />
      </linearGradient>
      <linearGradient id="hole" x1="0" y1="0" x2="0" y2="1">
        <stop offset="0" stopColor="#3a3a3a" /><stop offset="1" stopColor="#b4b4b4" />
      </linearGradient>
    </defs>
    <g shapeRendering="crispEdges">
      <polygon points="505,358 860,322 890,322 912,328 915,338 910,344 918,363 921,375 915,395 908,408 890,413 857,419 715,433 512,454 495,450 480,430 478,410 485,390 503,379 498,367" fill="url(#body)" stroke="#0b0b0b" strokeWidth="1.500" />
      <polygon points="518,358 860,322 890,322 912,328 915,338 545,374 535,367" fill="#636363" stroke="#0b0b0b" />
      {hatchLines.map(i => (
        <line key={i} x1={530 + i * 2} y1={358 + i * 2} x2={870 + i * 7} y2={323 + i * 2} stroke="#3a3a3a" />
      ))}
      {teeth.map(([x, y], i) => (
        <g key={i}>
          <line x1={x - 3} y1={y - 5} x2={x - 30} y2={y - 9} stroke="#3a3a3a" />
          <polygon points={`${x - 3},${y - 3} ${x + 2},${y - 4} ${x + 3},${y + 3} ${x - 2},${y + 4}`} fill="#474747" stroke="#1a1a1a" />
          <rect x={x - 2} y={y - 2} width="3" height="3" fill="#7d7d7d" />
        </g>
      ))}
      <polygon points="533,376 912,340 910,346 535,384" fill="#3b3b3b" stroke="#0b0b0b" />
      <line x1="533" y1="380" x2="910" y2="343" stroke="#0b0b0b" />
      <line x1="528" y1="387" x2="905" y2="350" stroke="#1a1a1a" />
      {upper.map(([x, y], i) => (
        <ellipse key={i} cx={x} cy={y} rx="10" ry="5.500" transform={`rotate(50 ${x} ${y})`} fill="url(#hole)" stroke="#0b0b0b" strokeWidth="1.500" />
      ))}
      {lower.map(([x, y], i) => (
        <ellipse key={i} cx={x} cy={y} rx="10" ry="2.500" transform={`rotate(-24 ${x} ${y})`} fill="url(#hole)" stroke="#0b0b0b" strokeWidth="1.300" />
      ))}
      <ellipse cx="513" cy="416" rx="31" ry="37" fill="#5e5e5e" stroke="#0b0b0b" strokeWidth="1.300" />
      <polygon points="505,358 533,366 537,375 530,380 528,387 524,384 503,379 498,367" fill="#8a8a8a" stroke="#0b0b0b" />
      <ellipse cx="509" cy="416" rx="30" ry="37" fill="#858585" stroke="#0b0b0b" strokeWidth="1.300" />
      <ellipse cx="510" cy="415" rx="11" ry="13" fill="#6e6e6e" stroke="#0b0b0b" />
      <ellipse cx="511" cy="415" rx="8" ry="10" fill="#4b4b4b" stroke="#0b0b0b" />
      <ellipse cx="514" cy="415" rx="6" ry="8" fill="#3a3a3a" />
      {bolts.map(([x, y], i) => <circle key={i} cx={x} cy={y} r="3.500" fill="#565656" stroke="#0b0b0b" />)}
      <ellipse cx="510" cy="416" rx="23" ry="28" fill="none" stroke="#ff19ff" strokeWidth="1.100" />
      {bolts.map(([x, y], i) => <circle key={`m${i}`} cx={x} cy={y} r="2.200" fill="none" stroke="#ff19ff" />)}
      <line x1="511" y1="415" x2="883" y2="377" stroke="#0000ff" strokeWidth="1.300" />
      <line x1="883" y1="377" x2="907" y2="375" stroke="#1e9bff" strokeWidth="1.300" />
      <polygon points="852,314 942,337 925,440 835,417" fill="none" stroke="#1e9bff" strokeWidth="1.200" />
      <polygon points="871,328 923,323 907,426 853,431" fill="none" stroke="#ff8484" strokeWidth="1.200" />
      <polygon points="817,368 873,363 960,386 910,391" fill="none" stroke="#84ff00" strokeWidth="1.200" />
      <line x1="894" y1="342" x2="888" y2="377" stroke="#84ff00" strokeWidth="1.200" />
      <line x1="858" y1="369" x2="888" y2="377" stroke="#ff8484" strokeWidth="1.200" />
    </g>
    <g>
      <line x1="316" y1="583" x2="320" y2="545" stroke="#6fcf80" strokeWidth="4" />
      <line x1="316" y1="583" x2="320" y2="545" stroke="#e8f8ea" strokeWidth="1.200" />
      <polygon points="321,534 317,549 325,549" fill="#6fcf80" stroke="#4da860" strokeWidth=".5" />
      <line x1="310" y1="586" x2="280" y2="578" stroke="#f08a8a" strokeWidth="4" />
      <polygon points="267,575 281,573 279,582" fill="#f08a8a" />
      <rect x="279" y="577" width="3" height="4" fill="#d42a2a" />
      <line x1="318" y1="586" x2="334" y2="585" stroke="#8ba6d6" strokeWidth="4" />
      <circle cx="334" cy="585" r="3.500" fill="#5d9cf0" />
      <rect x="332" y="583" width="5" height="5" fill="#2a62c0" />
      <polygon points="340,585 334,582 334,588" fill="#8ba6d6" />
      <circle cx="315" cy="587" r="6.500" fill="#f4f08a" stroke="#c8c35c" />
      <text x="256" y="578" fontFamily="Liberation Sans" fontSize="11" fill="#e8505a">X</text>
      <text x="321" y="529" fontFamily="Liberation Sans" fontSize="11" fill="#53b86a">Y</text>
      <text x="342" y="588" fontFamily="Liberation Sans" fontSize="11" fill="#4a93f0">Z</text>
    </g>
  </Scene>
);

export default function App() {
  return (
    <Page>
      <Global />
      <TitleBar>
        <svg width="17" height="17" viewBox="0 0 17 17" style={{ flex: "none" }}>
          <circle cx="8.500" cy="8.500" r="8" fill="#2e7fc4" />
          <circle cx="8.500" cy="8.500" r="5.500" fill="#d6e8f6" />
          <path d="M6 4V13M12 4L7 8.500L12 13" stroke="#1a5d9e" strokeWidth="2" fill="none" />
        </svg>
        <TitleText>КОМПАС-3D V16  - cima</TitleText>
        <WinBtn><svg width="10" height="10"><path d="M0 5H10" stroke="#111" /></svg></WinBtn>
        <WinBtn><svg width="10" height="10"><path d="M2.500 2.500V.5H9.500V7.500H7.500M.5 2.500H7.500V9.500H.5Z" stroke="#111" fill="none" /></svg></WinBtn>
        <WinBtn><svg width="11" height="11"><path d="M.5 .5L10.500 10.500M10.500 .5L.5 10.500" stroke="#111" /></svg></WinBtn>
        <Gap $w={2} />
      </TitleBar>
      <MenuBar>
        <Grip $w={12} />
        {menu.map(([m, w], i) => <MenuItem key={i} $w={w}>{m}</MenuItem>)}
      </MenuBar>
      <ToolRow><ToolBand>{renderItems(row1a)}</ToolBand><ToolBand>{renderItems(row1b)}</ToolBand></ToolRow>
      <ToolRow><ToolBand>{renderItems(row2a)}</ToolBand><ToolBand>{renderItems(row2b)}</ToolBand></ToolRow>
      <Workspace>
        <LeftBar>
          <LeftGrip />
          {left.map((it, i) => it.k === "r"
            ? <LeftRule key={i} $h={it.h} />
            : <LeftRow key={i} $h={it.h}>{it.dots && <LeftDots />}{I[it.n]}{it.mark && <LeftCorner />}</LeftRow>)}
          <LeftFoot><FootMark $w={3} /><FootMark $w={6} /></LeftFoot>
        </LeftBar>
        <Main>
          <TabBand>
            <ActiveTab>
              <svg width="15" height="16" viewBox="0 0 15 16" style={{ flex: "none" }}>
                <path d="M1 5L5 1H14V11L10 15H1Z" fill="#d8d8d8" stroke="#111" strokeWidth="1.300" />
                <circle cx="6" cy="9" r="3" fill="#666" stroke="#111" />
              </svg>
              <TabName>cima</TabName>
              <svg width="9" height="9" style={{ flex: "none" }}><path d="M1 1L8 8M8 1L1 8" stroke="#111" strokeWidth="1.500" /></svg>
            </ActiveTab>
            <DocTab>
              <svg width="14" height="17" viewBox="0 0 14 17" style={{ flex: "none" }}>
                <path d="M1 1H9L13 5V16H1Z" fill="#fff" stroke="#111" />
                <rect x="4" y="4" width="5" height="4" fill="#fff" stroke="#1030e0" />
                <path d="M2 12H12M2 14H12M5 10V16M9 10V16" stroke="#333" />
              </svg>
              <DocName>Чертеж БЕЗ ИМЕНИ1</DocName>
            </DocTab>
            <TabMenu />
          </TabBand>
          <Content>
            <Panel>
              <PanelHead>
                <PanelTitle>Дерево модели</PanelTitle>
                <PanelBtn $c="#6f9bd1"><svg width="9" height="11"><path d="M2 1H7M3 1V6H6V1M1 6H8M4.500 6V11" stroke="#55617a" fill="none" /></svg></PanelBtn>
                <PanelBtn $c="#c7a4a4"><svg width="9" height="9"><path d="M1 1L8 8M8 1L1 8" stroke="#8b8b90" strokeWidth="1.500" /></svg></PanelBtn>
              </PanelHead>
              <PanelBar>
                <Slot $w={30}><Svg><path d="M3 3V21M3 9H14M3 15H14M3 21H14" stroke="#111" fill="none" /><rect x="1" y="1" width="4" height="4" fill="#e6d27a" stroke="#111" /><rect x="14" y="7" width="4" height="4" fill="#1ec8c8" stroke="#111" /><rect x="14" y="13" width="4" height="4" fill="#1ec8c8" stroke="#111" /><rect x="10" y="19" width="4" height="4" fill="#e6c022" stroke="#111" /></Svg></Slot>
                <Slot $w={31}>{I.treeCheck}</Slot>
                <Arrow $w={14} $dark />
                <Sep $w={2} />
                <Gap $w={3} />
                <Slot $w={30} $on><Svg w={20} h={24} vb="0 0 20 24"><path d="M2 1H18V23H7L2 18Z" fill="#fff" stroke="#00108a" strokeWidth="1.300" /><path d="M5 4H9V9M9 6H15M9 9H15" stroke="#222" fill="none" /><path d="M3 14H17" stroke="#00108a" /></Svg></Slot>
                <Slot $w={30}><Svg><path d="M2 2H12V20H2Z" fill="#9a9da6" stroke="#2c2f38" /><path d="M4 6H10M4 10H10M4 14H10" stroke="#2c2f38" /><rect x="12" y="12" width="11" height="9" fill="#9a9da6" stroke="#2c2f38" /><path d="M14 16H21" stroke="#2c2f38" strokeWidth="2" /><path d="M17 2V9M15 7L17 10L19 7" stroke="#2c2f38" fill="none" /></Svg></Slot>
              </PanelBar>
              <PanelWell>
                <TreeView>
                  <TreeList>
                    <TreeLine />
                    {Array.from({ length: 11 }, (_, i) => (
                      <TreeRow key={i}><CutEl />{i < 10 && <TreeLabel $hi={i === 9}>Вырезать элемент</TreeLabel>}</TreeRow>
                    ))}
                  </TreeList>
                  <VScroll><VThumb /><Caret d="up" /><Caret d="down" /></VScroll>
                </TreeView>
                <HScroll><HThumb /><Caret d="left" /><Caret d="right" /></HScroll>
                <Splitter />
              </PanelWell>
              <PanelTabs>
                <PanelTab $on $w={72}>Построение</PanelTab>
                <PanelTab $w={73}>Исполнения</PanelTab>
                <PanelTab $w={39}>Зоны</PanelTab>
              </PanelTabs>
            </Panel>
            <Viewport><Model /></Viewport>
          </Content>
          <WhiteGap />
          <BottomDock>
            <CommandPanel><CommandFill /></CommandPanel>
            <PropertyPanel />
          </BottomDock>
        </Main>
      </Workspace>
      <StatusBar>
        <StatusTop />
        <StatusDivider />
        <StatusPatch />
      </StatusBar>
    </Page>
  );
}
